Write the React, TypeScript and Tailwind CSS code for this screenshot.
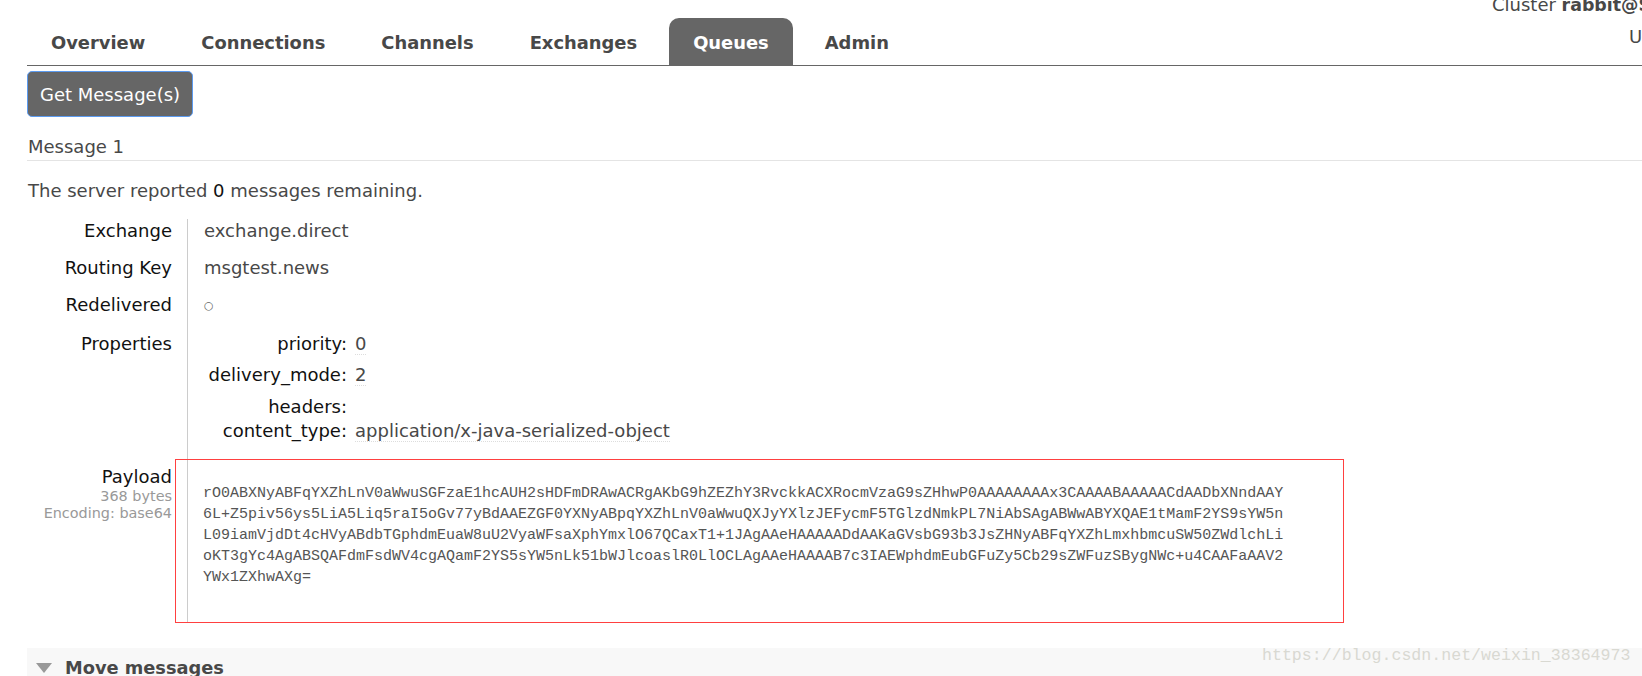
const tabs = ["Overview", "Connections", "Channels", "Exchanges", "Queues", "Admin"];

const payload = [
  "rO0ABXNyABFqYXZhLnV0aWwuSGFzaE1hcAUH2sHDFmDRAwACRgAKbG9hZEZhY3RvckkACXRocmVzaG9sZHhwP0AAAAAAAAx3CAAAABAAAAACdAADbXNndAAY",
  "6L+Z5piv56ys5LiA5Liq5raI5oGv77yBdAAEZGF0YXNyABpqYXZhLnV0aWwuQXJyYXlzJEFycmF5TGlzdNmkPL7NiAbSAgABWwABYXQAE1tMamF2YS9sYW5n",
  "L09iamVjdDt4cHVyABdbTGphdmEuaW8uU2VyaWFsaXphYmxlO67QCaxT1+1JAgAAeHAAAAADdAAKaGVsbG93b3JsZHNyABFqYXZhLmxhbmcuSW50ZWdlchLi",
  "oKT3gYc4AgABSQAFdmFsdWV4cgAQamF2YS5sYW5nLk51bWJlcoaslR0LlOCLAgAAeHAAAAB7c3IAEWphdmEubGFuZy5Cb29sZWFuzSBygNWc+u4CAAFaAAV2",
  "YWx1ZXhwAXg=",
];

const props = [
  { key: "priority:", value: "0", cls: "h-[31px]" },
  { key: "delivery_mode:", value: "2", cls: "h-[32px]" },
  { key: "headers:", value: "", cls: "h-[24px]" },
  { key: "content_type:", value: "application/x-java-serialized-object", cls: "h-[24px]" },
];

function Row({ label, children, cls }: { label: React.ReactNode; children: React.ReactNode; cls: string }) {
  return (
    <div className={`flex ${cls}`}>
      <div className="w-[145px] shrink-0 text-right text-[#111]">{label}</div>
      <div className="ml-[15px] flex-1 border-l border-[#ccc] pl-4">{children}</div>
    </div>
  );
}

export default function App() {
  return (
    <div className="relative h-[676px] w-[1642px] overflow-hidden bg-white font-['DejaVu_Sans',sans-serif] text-[18px] leading-6 text-[#484848]">
      {/* header */}
      <div className="ml-[27px] flex h-[66px] justify-between border-b border-[#666]">
        <nav className="flex gap-2 pt-[18px]">
          {tabs.map(t => (
            <div
              key={t}
              className={`flex h-[47px] items-center rounded-t-[10px] px-6 pt-0.5 text-[17.9px] font-bold ${t === "Queues" ? "bg-[#666] text-white" : "text-[#484848]"}`}
            >
              {t}
            </div>
          ))}
        </nav>
        <div className="-mt-[7px] w-[150px] shrink-0 overflow-hidden whitespace-nowrap">
          <div>
            Cluster <b className="text-[17.4px]">rabbit@S</b>
          </div>
          <div className="mt-2 pl-[137px]">U</div>
        </div>
      </div>

      <div className="pl-[27px]">
        <button className="mt-[5px] block h-[46px] w-[166px] rounded-[5px] border border-[#5c9bf0] bg-[#666] pt-px text-[18px] text-white">
          Get Message(s)
        </button>

        <div className="mt-[18px] h-[26px] border-b border-[#e4e4e4] pl-px">Message 1</div>
        <p className="mt-[18px] h-[40px] pl-px">
          The server reported <span className="text-[#111]">0</span> messages remaining.
        </p>

        <Row label="Exchange" cls="h-[37px]">exchange.direct</Row>
        <Row label="Routing Key" cls="h-[37px]">msgtest.news</Row>
        <Row label="Redelivered" cls="h-[37px]">
          <span className="relative -top-0.5 text-[11px] text-[#666]">○</span>
        </Row>
        <Row label={<div className="pt-0.5">Properties</div>} cls="h-[129px]">
          <div className="pt-0.5">
            {props.map(p => (
              <div key={p.key} className={`flex ${p.cls}`}>
                <div className="-ml-px w-[144px] shrink-0 text-right text-[#111]">{p.key}</div>
                <div className="ml-2">
                  {p.value && <span className="border-b border-dotted border-[#ddd]">{p.value}</span>}
                </div>
              </div>
            ))}
          </div>
        </Row>
        <Row
          cls="h-[163px]"
          label={
            <div className="pt-1.5">
              <div className="text-[#111]">Payload</div>
              <div className="-mt-px text-[14.4px] leading-[17px] text-[#999]">368 bytes</div>
              <div className="text-[14.4px] leading-[17px] text-[#999]">Encoding: base64</div>
            </div>
          }
        >
          <pre className="-ml-px pt-6 font-['Liberation_Mono',monospace] text-[15px] leading-[21px] text-[#555]">
            {payload.join("\n")}
          </pre>
        </Row>

        <div className="mt-[26px] flex h-[40px] items-start gap-[13px] bg-[#f8f8f8] pl-[9px] pt-2">
          <svg width="16" height="10" viewBox="0 0 16 10" className="mt-[7px]">
            <path d="M0 0h16L8 10z" fill="#999" />
          </svg>
          <span className="text-[17.8px] font-bold text-[#484848]">Move messages</span>
        </div>
      </div>

      {/* screenshot annotation and watermark */}
      <div className="absolute left-[175px] top-[459px] h-[164px] w-[1169px] border border-[#ff4040]" />
      <div className="absolute left-[1262px] top-[646px] whitespace-nowrap font-['Liberation_Mono',monospace] text-[16.6px] leading-5 text-[#d9d9d2]">
        https://blog.csdn.net/weixin_38364973
      </div>
    </div>
  );
}
